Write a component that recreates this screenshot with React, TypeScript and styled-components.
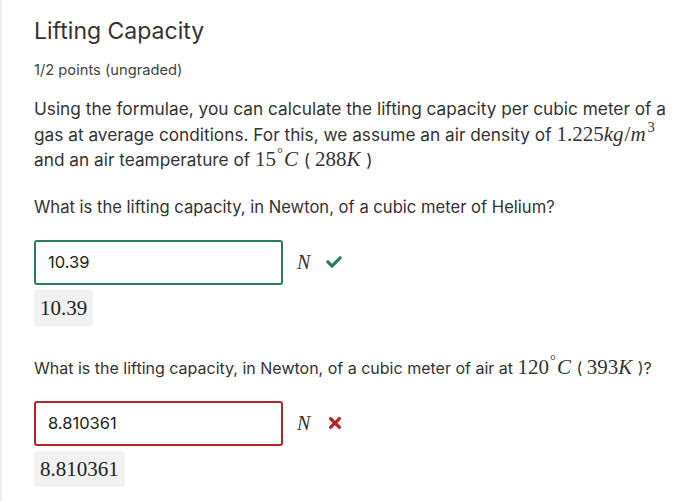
import React from "react";
import styled, { createGlobalStyle } from "styled-components";
import { FaCheck, FaTimes } from "react-icons/fa";

const GlobalStyle = createGlobalStyle`
  html, body {
    margin: 0;
    padding: 0;
    background: #fff;
  }
  body {
    font-family: Inter, "Noto Sans", sans-serif;
    color: #333;
  }
`;

const Page = styled.div`
  min-height: 501px;
  box-sizing: border-box;
  border-left: 2px solid #efefef;
  padding: 17px 32px 0 32px;
`;

const Title = styled.h2`
  margin: 0;
  font-size: 23px;
  font-weight: 400;
  line-height: 28px;
  color: #333;
`;

const Points = styled.div`
  margin-top: 15px;
  font-size: 14.7px;
  line-height: 20px;
  color: #444;
`;

const Paragraph = styled.p`
  margin: 16px 0 0;
  font-size: 17.25px;
  line-height: 25.5px;
  color: #333;
`;

const Question = styled.p<{ $size?: number; $gap?: number }>`
  margin: ${(p) => p.$gap ?? 22}px 0 0;
  font-size: ${(p) => p.$size ?? 16}px;
  line-height: 25px;
  color: #333;
`;

const Math = styled.span`
  font-family: "Liberation Serif", "DejaVu Serif", serif;
  font-size: 21px;
  line-height: 1;
  white-space: nowrap;
`;

const MathVar = styled.i`
  font-style: italic;
  margin-right: 1px;
`;

const Sup = styled.sup`
  font-size: 0.7em;
  line-height: 0;
  vertical-align: 0.55em;
  margin: 0 1px;
`;

const AnswerRow = styled.div`
  margin-top: 20px;
  display: flex;
  align-items: center;
  gap: 14px;
`;

const AnswerInput = styled.div<{ $correct: boolean }>`
  box-sizing: border-box;
  width: 249px;
  height: 45px;
  border: 2px solid ${(p) => (p.$correct ? "#2a7d5b" : "#b42525")};
  border-radius: 3px;
  padding: 0 12px;
  display: flex;
  align-items: center;
  font-size: 16.5px;
  color: #222;
`;

const Unit = styled.span`
  font-family: "Liberation Serif", "DejaVu Serif", serif;
  font-style: italic;
  font-size: 20px;
  color: #333;
`;

const Mark = styled.span<{ $correct: boolean }>`
  display: flex;
  align-items: center;
  margin-left: 2px;
  color: ${(p) => (p.$correct ? "#2a7d5b" : "#b42525")};
`;

const Given = styled.div`
  display: inline-block;
  margin-top: 5px;
  padding: 0 6px;
  height: 36px;
  line-height: 36px;
  background: #f1f1f1;
  border-radius: 3px;
  font-family: "Liberation Serif", "DejaVu Serif", serif;
  font-size: 21px;
  color: #222;
`;

const App = () => (
  <>
    <GlobalStyle />
    <Page>
      <Title>Lifting Capacity</Title>
      <Points>1/2 points (ungraded)</Points>
      <Paragraph>
        Using the formulae, you can calculate the lifting capacity per cubic meter of a gas at average
        conditions. For this, we assume an air density of{" "}
        <Math>
          1.225<MathVar>kg</MathVar>/<MathVar>m</MathVar>
          <Sup>3</Sup>
        </Math>{" "}
        and an air teamperature of{" "}
        <Math>
          15<Sup>°</Sup>
          <MathVar>C</MathVar>
        </Math>{" "}
        ( <Math>288<MathVar>K</MathVar></Math> )
      </Paragraph>

      <Question $size={16.6}>What is the lifting capacity, in Newton, of a cubic meter of Helium?</Question>
      <AnswerRow>
        <AnswerInput $correct>10.39</AnswerInput>
        <Unit>N</Unit>
        <Mark $correct>
          <FaCheck size={16} />
        </Mark>
      </AnswerRow>
      <Given>10.39</Given>

      <Question $gap={30}>
        What is the lifting capacity, in Newton, of a cubic meter of air at{" "}
        <Math>
          120<Sup>°</Sup>
          <MathVar>C</MathVar>
        </Math>{" "}
        ( <Math>393<MathVar>K</MathVar></Math> )?
      </Question>
      <AnswerRow>
        <AnswerInput $correct={false}>8.810361</AnswerInput>
        <Unit>N</Unit>
        <Mark $correct={false}>
          <FaTimes size={18} />
        </Mark>
      </AnswerRow>
      <div>
        <Given>8.810361</Given>
      </div>
    </Page>
  </>
);

export default App;
